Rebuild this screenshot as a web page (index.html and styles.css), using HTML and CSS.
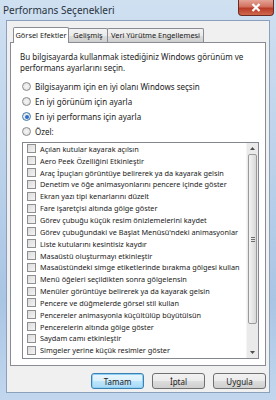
FILE: index.html
```html
<!DOCTYPE html>
<html lang="tr">
<head>
  <meta charset="UTF-8">
  <title>Performans Seçenekleri</title>
  <link rel="stylesheet" href="styles.css">
</head>
<body>

  <div class="ventana">
    <div class="barra-titulo">
      <span class="titulo">Performans Seçenekleri</span>
      <button class="btn-cerrar">
        <svg width="10" height="9" viewBox="0 0 10 9"><path d="M1.5 1 L8.5 8 M8.5 1 L1.5 8" stroke="#fff" stroke-width="2.2"/></svg>
      </button>
    </div>

    <div class="cliente">
      <div class="pestanas">
        <div class="pestana activa">Görsel Efektler</div>
        <div class="pestana gelismis">Gelişmiş</div>
        <div class="pestana veri">Veri Yürütme Engellemesi</div>
      </div>

      <div class="panel">
        <p class="intro">Bu bilgisayarda kullanmak istediğiniz Windows görünüm ve performans ayarlarını seçin.</p>

        <div class="radios">
          <label class="radio"><span class="circulo"></span>Bilgisayarım için en iyi olanı Windows seçsin</label>
          <label class="radio"><span class="circulo"></span>En iyi görünüm için ayarla</label>
          <label class="radio"><span class="circulo marcado"></span>En iyi performans için ayarla</label>
          <label class="radio"><span class="circulo"></span>Özel:</label>
        </div>

        <div class="lista">
          <ul class="opciones">
            <li><span class="caja"></span>Açılan kutular kayarak açılsın</li>
            <li><span class="caja"></span>Aero Peek Özelliğini Etkinleştir</li>
            <li><span class="caja"></span>Araç İpuçları görüntüye belirerek ya da kayarak gelsin</li>
            <li><span class="caja"></span>Denetim ve öğe animasyonlarını pencere içinde göster</li>
            <li><span class="caja"></span>Ekran yazı tipi kenarlarını düzelt</li>
            <li><span class="caja"></span>Fare işaretçisi altında gölge göster</li>
            <li><span class="caja"></span>Görev çubuğu küçük resim önizlemelerini kaydet</li>
            <li><span class="caja"></span>Görev çubuğundaki ve Başlat Menüsü'ndeki animasyonlar</li>
            <li><span class="caja"></span>Liste kutularını kesintisiz kaydır</li>
            <li><span class="caja"></span>Masaüstü oluşturmayı etkinleştir</li>
            <li><span class="caja"></span>Masaüstündeki simge etiketlerinde bırakma gölgesi kullan</li>
            <li><span class="caja"></span>Menü öğeleri seçildikten sonra gölgelensin</li>
            <li><span class="caja"></span>Menüler görüntüye belirerek ya da kayarak gelsin</li>
            <li><span class="caja"></span>Pencere ve düğmelerde görsel stil kullan</li>
            <li><span class="caja"></span>Pencereler animasyonla küçültülüp büyütülsün</li>
            <li><span class="caja"></span>Pencerelerin altında gölge göster</li>
            <li><span class="caja"></span>Saydam camı etkinleştir</li>
            <li><span class="caja"></span>Simgeler yerine küçük resimler göster</li>
          </ul>
          <div class="scroll">
            <div class="flecha arriba"><svg width="5" height="3" viewBox="0 0 5 3"><path d="M0 3 L2.5 0 L5 3 Z" fill="#4d4d4d"/></svg></div>
            <div class="pista">
              <div class="pulgar"><span class="grip"></span></div>
            </div>
            <div class="flecha abajo"><svg width="5" height="3" viewBox="0 0 5 3"><path d="M0 0 L2.5 3 L5 0 Z" fill="#4d4d4d"/></svg></div>
          </div>
        </div>
      </div>

      <div class="botones">
        <button class="btn predeterminado">Tamam</button>
        <button class="btn">İptal</button>
        <button class="btn">Uygula</button>
      </div>
    </div>
  </div>

</body>
</html>
```

FILE: styles.css
```css
body {
  margin: 0;
  font-family: "Noto Sans", "Open Sans", sans-serif;
  font-size: 8px;
  color: #1a1a1a;
}
.ventana {
  width: 276px;
  height: 400px;
  box-sizing: border-box;
  padding: 0 6px 7px 6px;
  background: linear-gradient(180deg, #cfe0f1 0%, #bcd2ea 40%, #a9c5e4 75%, #c2d7ee 100%);
  display: flex;
  flex-direction: column;
}
.barra-titulo {
  height: 20px;
  display: flex;
  align-items: center;
  justify-content: space-between;
  position: relative;
}
.titulo {
  font-size: 10px;
  color: #2a3440;
  margin-left: -3px;
  margin-top: -1px;
}
.btn-cerrar {
  position: absolute;
  right: -4px;
  top: 0;
  width: 36px;
  height: 16px;
  border: 1px solid #6b2b23;
  border-top: none;
  border-radius: 0 0 4px 4px;
  background: linear-gradient(180deg, #e4a496 0%, #d2705e 45%, #b93b26 55%, #cf6a4e 100%);
  display: flex;
  align-items: center;
  justify-content: center;
  padding: 0;
}
.cliente {
  flex: 1;
  background: #f0f0f0;
  border: 1px solid #8aa0bb;
  padding: 6px 3px 0 3px;
  display: flex;
  flex-direction: column;
}
.pestanas {
  display: flex;
  padding-left: 4px;
  height: 15px;
  align-items: flex-end;
  font-size: 7.4px;
}
.pestana {
  height: 13px;
  line-height: 13px;
  text-align: center;
  border: 1px solid #898c95;
  border-bottom: none;
  margin-left: -1px;
  background: linear-gradient(180deg, #f2f2f2 0%, #ebebeb 50%, #dddddd 51%, #cfcfcf 100%);
  border-radius: 2px 2px 0 0;
  white-space: nowrap;
}
.pestana.activa {
  width: 54px;
  height: 15px;
  line-height: 15px;
  background: #fff;
  position: relative;
  z-index: 1;
  margin-bottom: -1px;
}
.pestana.gelismis {
  width: 38px;
}
.pestana.veri {
  width: 95px;
}
.panel {
  background: #fff;
  border: 1px solid #898c95;
  height: 324px;
  box-sizing: border-box;
  padding: 8px 6px 0 7px;
}
.intro {
  margin: 0 0 6px 0;
  line-height: 11px;
  padding-left: 2px;
}
.radios {
  display: flex;
  flex-direction: column;
  padding-left: 4px;
}
.radio {
  height: 15px;
  display: flex;
  align-items: center;
}
.circulo {
  width: 7px;
  height: 7px;
  border: 1px solid #8a8a8a;
  border-radius: 50%;
  background: radial-gradient(circle, #f6f6f6 0%, #dcdcdc 100%);
  margin-right: 4px;
  position: relative;
}
.circulo.marcado {
  border-color: #3d7bad;
}
.circulo.marcado::after {
  content: "";
  position: absolute;
  left: 1.5px;
  top: 1.5px;
  width: 4px;
  height: 4px;
  border-radius: 50%;
  background: #2c6fd0;
}
.lista {
  margin-top: 3px;
  height: 215px;
  border: 1px solid #828790;
  display: flex;
  margin-left: 4px;
  margin-right: 0;
}
.opciones {
  list-style: none;
  margin: 0;
  padding: 0 0 0 4px;
  flex: 1;
  overflow: hidden;
  font-size: 7.3px;
}
.opciones li {
  height: 11.85px;
  display: flex;
  align-items: center;
  white-space: nowrap;
}
.caja {
  width: 7px;
  height: 7px;
  flex-shrink: 0;
  border: 1px solid #8f8f8f;
  background: linear-gradient(135deg, #dcdcdc 0%, #f4f4f4 100%);
  margin-right: 4px;
}
.scroll {
  width: 11px;
  display: flex;
  flex-direction: column;
  background: #eaeaea;
  border-left: 1px solid #f4f4f4;
}
.flecha {
  height: 11px;
  display: flex;
  align-items: center;
  justify-content: center;
}
.pista {
  flex: 1;
  padding: 0 1px;
}
.pulgar {
  height: 168px;
  border: 1px solid #9a9a9a;
  border-radius: 2px;
  background: linear-gradient(90deg, #f3f3f3 0%, #e6e6e6 50%, #d8d8d8 100%);
  display: flex;
  align-items: center;
  justify-content: center;
}
.grip {
  width: 4px;
  height: 5px;
  background: repeating-linear-gradient(180deg, #6d6d6d 0 1px, transparent 1px 2px);
}
.botones {
  display: flex;
  justify-content: flex-end;
  gap: 8px;
  padding: 7px 0 0 0;
}
.btn {
  width: 53px;
  height: 16px;
  font-family: inherit;
  font-size: 8px;
  color: #1a1a1a;
  border: 1px solid #707070;
  border-radius: 3px;
  background: linear-gradient(180deg, #f2f2f2 0%, #ebebeb 50%, #dddddd 51%, #cfcfcf 100%);
  padding: 0;
}
.btn.predeterminado {
  border-color: #3c7fb1;
  box-shadow: inset 0 0 0 1px #8fd0f5;
  background: linear-gradient(180deg, #eaf6fd 0%, #d9f0fc 50%, #bee6fd 51%, #a7d9f5 100%);
}
```
